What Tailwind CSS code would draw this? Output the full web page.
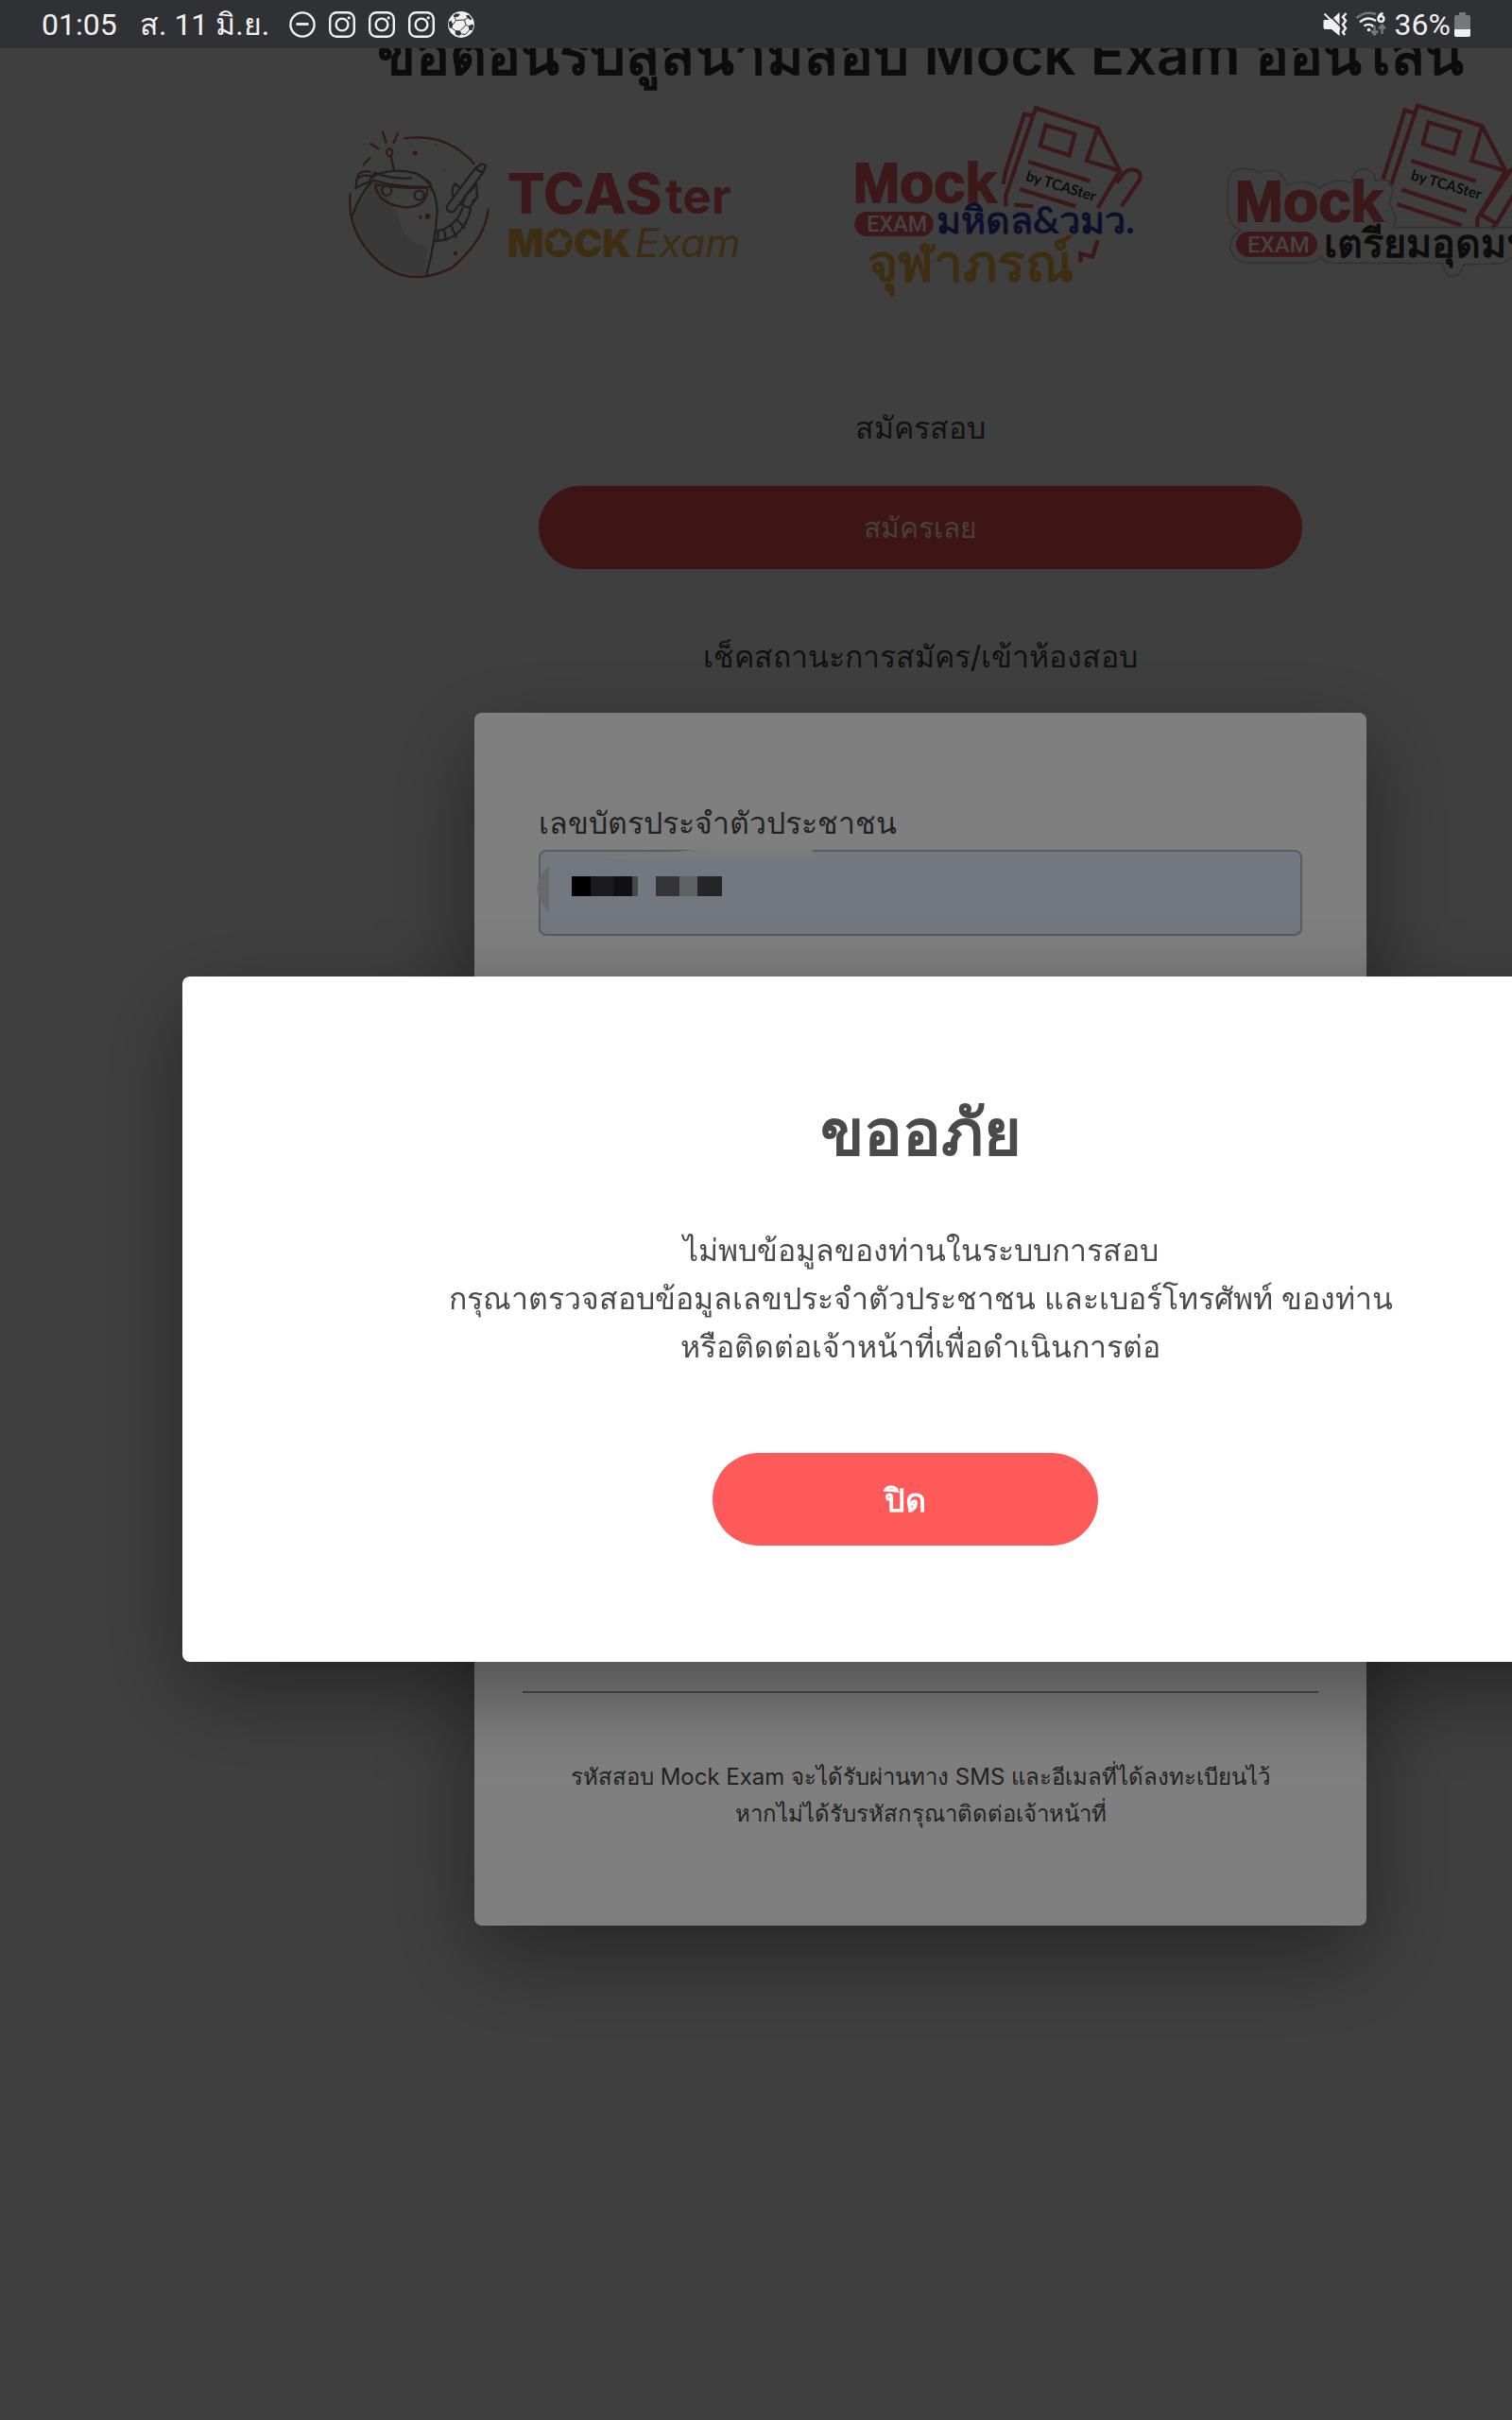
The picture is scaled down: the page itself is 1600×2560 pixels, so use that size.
<!DOCTYPE html>
<html lang="th">
<head>
    <meta charset="UTF-8">
    <meta name="viewport" content="width=device-width, initial-scale=1.0">
    <title>TCASter Mock Exam</title>
    <script src="https://cdn.jsdelivr.net/npm/@tailwindcss/browser@4"></script>
</head>
<body class="bg-[#7f7f7f] font-[Inter,sans-serif] text-[#222222] min-h-screen overflow-x-hidden">

    <!-- Status bar -->
    <header class="fixed top-0 inset-x-0 z-30 h-[51px] bg-[#303134] text-[#f0f0f0] flex items-center justify-between px-11 font-[Roboto,sans-serif] text-[32px] leading-none">
        <div class="flex items-center">
            <span class="w-[104px]">01:05</span>
            <span class="w-[158px] whitespace-nowrap">ส. 11 มิ.ย.</span>
            <div class="flex gap-3.5">
                <svg class="size-7" viewBox="0 0 28 28" fill="none" stroke="currentColor" stroke-width="2.4"><circle cx="14" cy="14" r="12.6"/><path d="M7.5 13.5h13" stroke-width="2.8"/></svg>
                <svg class="size-7" viewBox="0 0 28 28" fill="none" stroke="currentColor" stroke-width="2.4"><rect x="1.2" y="1.2" width="25.6" height="25.6" rx="7"/><circle cx="14" cy="14" r="6.4"/><circle cx="21.2" cy="6.8" r="1.6" fill="currentColor" stroke="none"/></svg>
                <svg class="size-7" viewBox="0 0 28 28" fill="none" stroke="currentColor" stroke-width="2.4"><rect x="1.2" y="1.2" width="25.6" height="25.6" rx="7"/><circle cx="14" cy="14" r="6.4"/><circle cx="21.2" cy="6.8" r="1.6" fill="currentColor" stroke="none"/></svg>
                <svg class="size-7" viewBox="0 0 28 28" fill="none" stroke="currentColor" stroke-width="2.4"><rect x="1.2" y="1.2" width="25.6" height="25.6" rx="7"/><circle cx="14" cy="14" r="6.4"/><circle cx="21.2" cy="6.8" r="1.6" fill="currentColor" stroke="none"/></svg>
                <svg class="size-7" viewBox="0 0 28 28">
                    <circle cx="14" cy="14" r="13.9" fill="currentColor"/>
                    <g fill="#303134"><path d="M8.5 2.2 13 3 11 5.400 7 6.500 5.500 4.600z"/><path d="M19 4.500 22 3.800 25.500 8 24 9.200 20.500 7z"/><path d="M.6 11.500 3.400 9.500 5.200 14 4.400 18 1.600 17.500z"/><path d="M21.500 15.500 26 13.500 27.300 15.500 25.500 20 22.500 20z"/><path d="M7.500 20 13 20.500 14.500 24 11.500 26 8 24.500z"/></g>
                    <path d="M7 6.500 8.500 9.500 5.200 14M8.500 9.500 17.500 9 20.500 7M17.500 9 19 14.500 21.500 15.500M19 14.500 13 20.500M22.500 20 18.500 24.500 14.500 24M4.400 18 7.500 20" fill="none" stroke="#303134" stroke-width="1"/>
                </svg>
            </div>
        </div>
        <div class="flex items-center">
            <svg class="w-[26px] h-7" viewBox="0 0 26 28" fill="currentColor">
                <path d="M1 9h5l3.500-1L17.500 16v10L9 19H2.500Q.5 19 .5 17V10z"/><path d="M11 7 17.500 1v13z"/>
                <path d="M1.500 2.500 18 19" stroke="currentColor" stroke-width="2"/>
                <path d="M24.500 2 21 6l3 4-3 4 3 4-3 4 2 3" fill="none" stroke="currentColor" stroke-width="2.400"/>
            </svg>
            <svg class="w-[34px] h-7 ml-2" viewBox="0 0 34 28" fill="none" stroke="currentColor" stroke-width="2.400">
                <path d="M1.500 7Q11-1 22 3" stroke="#77787a"/><path d="M5 11.500Q13 4.500 22 10"/><path d="M9.500 15.500q5-3.500 10 .5"/><circle cx="14.500" cy="19.500" r="1.800" fill="currentColor" stroke="none"/>
                <path d="M29.500 2Q24.500 3.500 24.500 8"/><circle cx="27.500" cy="8" r="2.900"/>
                <path d="M20.500 15v9m-3.500-3.500 3.500 4 3.500-4M28.500 24v-9m-3.500 3.500 3.500-4 3.500 4" stroke="#77787a"/>
            </svg>
            <span class="ml-2">36%</span>
            <svg class="w-[17px] h-[26px] ml-1" viewBox="0 0 17 26"><path d="M5 0h7v3h3q2 0 2 2v13H0V5Q0 3 2 3h3z" fill="#77787a"/><path d="M0 18h17v6q0 2-2 2H2q-2 0-2-2z" fill="currentColor"/></svg>
        </div>
    </header>

    <main class="ml-48 -mr-[156px] pt-4 pb-16 flex flex-col items-center text-center text-[32px]">
        <h1 class="text-[60px] leading-[82px] h-[74px] font-semibold whitespace-nowrap text-[#181818]">ขอต้อนรับสู่สนามสอบ Mock Exam ออนไลน์</h1>

        <!-- Logos -->
        <div class="self-start pl-[158px] flex gap-[30px]">
            <svg class="w-[480px] h-60 shrink-0" viewBox="0 150 1440 720" fill="none" stroke-linecap="round" stroke-linejoin="round" stroke-width="7">
                <path d="M82 540Q130 452 140 450L215 560Q225 650 308 665L300 752Q130 760 70 580z" fill="#737373"/>
                <g stroke="#6a3030">
                    <path d="M235 319Q370 300 455 400M500 545Q490 640 385 730Q240 800 140 700Q50 610 62 495M105 403 124 382M126 336 152 352M165 298 175 331M213 303 200 333"/>
                    <ellipse cx="187" cy="364" rx="9" ry="12"/>
                    <path d="M142 470Q150 530 240 538Q310 535 306 475Q220 480 142 465M85 440Q90 420 125 425M300 450Q320 455 318 480"/>
                    <circle cx="308" cy="566" r="5" fill="#7a3030"/><circle cx="285" cy="569" r="2"/><circle cx="268" cy="365" r="4"/><circle cx="396" cy="684" r="3"/>
                </g>
                <g stroke="#404040">
                    <path d="M192 380 201 420M130 440Q200 410 270 430Q335 460 338 550Q332 650 304 752M130 455Q90 500 68 565M140 428Q190 450 255 445M135 452Q210 475 310 474M140 428 125 450M140 440Q95 430 82 450L80 478Q90 468 130 455"/>
                    <circle cx="178" cy="485" r="15"/><circle cx="281" cy="500" r="15"/>
                    <path d="M368 535 458 415 483 428 392 550Q370 560 368 535M458 415 480 400 493 405 483 428M390 505Q380 480 395 462L408 475M440 490 462 465 465 505 440 540 415 530 430 500M465 505 450 520"/>
                    <path d="M332 615Q400 600 418 540M334 645Q420 640 444 545M360 611 366 643M383 598 398 632M402 578 424 603M340 612v33"/>
                </g>
                <circle cx="335" cy="340" r="3" fill="#404040"/><circle cx="362" cy="422" r="3" fill="#555"/>
                <g stroke="none">
                    <text x="560" y="559" font-size="178" fill="#7a3030"><tspan font-weight="800">TCAS</tspan><tspan x="1062" font-size="154" font-weight="700">ter</tspan></text>
                    <text x="560" y="695" font-size="122" fill="#7d5a22"><tspan font-weight="900">MOCK</tspan><tspan x="966" font-size="128" font-weight="400" font-style="italic">Exam</tspan></text>
                    <path d="M725 612 736 634 760 636 743 654 749 678 725 667 702 680 708 654 690 637 714 634z" fill="#7f7f7f"/>
                </g>
            </svg>
            <svg class="w-[380px] h-60 shrink-0" viewBox="0 0 1140 720" fill="none" stroke-width="13">
                <path d="M605 315 612 275 672 92 700 98M613 385V350L708 73 905 137 975 272 905 390M905 137 870 240 975 272M740 127 832 155 815 223 722 193zM685 243 880 305M657 330 835 385M640 380 700 385M965 310 990 278Q1010 260 1035 275Q1045 290 1035 305L980 385M905 492 888 545 850 535V562" stroke="#7a3030"/>
                <text x="674" y="302" transform="rotate(17 674 302)" font-size="46" font-weight="700" font-family="Lato" fill="#181818">by TCASter</text>
                <text x="128" y="371" font-size="178" font-weight="700" font-family="Liberation Sans" fill="#7a3030" stroke="#7a3030" stroke-width="6">Mock</text>
                <rect x="133" y="402" width="250" height="78" rx="39" fill="#7a3030"/>
                <text x="172" y="464" font-size="70" font-weight="500" font-family="Roboto" fill="#888">EXAM</text>
                <text x="392" y="472" font-size="119" font-weight="700" font-family="Lato" fill="#1b2058">มหิดล&amp;วมว.</text>
                <text x="174" y="624" font-size="166" font-weight="700" font-family="Lato" fill="#7d5a22">จุฬาภรณ์</text>
            </svg>
            <svg class="w-[480px] h-60 shrink-0" viewBox="0 0 1440 720" fill="none" stroke-width="13">
                <path d="M580 300 650 80 685 90M605 320 690 65 895 130 970 272 880 425V455M895 130 862 240 970 272M725 118 825 148 805 218 707 187zM670 240 875 305M640 332 845 400M625 378 830 445M890 410 990 265M890 410 940 440 1040 275M940 440 925 455" stroke="#7a3030"/>
                <text x="667" y="300" transform="rotate(16 667 300)" font-size="46" font-weight="700" font-family="Lato" fill="#181818">by TCASter</text>
                <path d="M130 460Q90 450 88 400V310Q95 260 150 265Q180 270 190 278Q260 250 275 320Q330 290 380 328Q420 290 480 310Q490 260 530 267Q560 280 555 305Q610 290 612 335L600 375Q630 420 615 452H990M130 460Q95 480 95 520Q110 565 160 565H340Q370 560 380 545Q400 568 440 565H770Q775 605 805 608Q830 600 835 570L960 565 990 545" stroke="#666" stroke-width="5"/>
                <text x="110" y="431" font-size="184" font-weight="700" font-family="Liberation Sans" fill="#7a3030" stroke="#7a3030" stroke-width="6">Mock</text>
                <rect x="114" y="465" width="258" height="80" rx="40" fill="#7a3030"/>
                <text x="150" y="530" font-size="72" font-weight="500" font-family="Roboto" fill="#888">EXAM</text>
                <text x="392" y="545" font-size="124" font-weight="700" font-family="Lato" fill="#181818">เตรียมอุดมฯ</text>
            </svg>
        </div>

        <h2 class="mt-[98px] leading-[50px]">สมัครสอบ</h2>
        <button class="mt-9 w-[808px] h-[88px] rounded-full bg-[#7b2b2b] text-[#8c8080] text-[30px] font-medium">สมัครเลย</button>
        <h2 class="mt-[68px] leading-[50px]">เช็คสถานะการสมัคร/เข้าห้องสอบ</h2>

        <!-- Status check card -->
        <form class="mt-[34px] w-[944px] h-[1283px] rounded-lg bg-white px-[51px] pt-[92px] flex flex-col text-[#444444] shadow-[0_32px_96px_rgba(0,0,0,0.4)]">
            <label for="idcard" class="pl-[17px] text-left leading-[50px]">เลขบัตรประจำตัวประชาชน</label>
            <div class="relative mx-[17px] mt-[3px]">
                <input id="idcard" type="text" class="block w-full h-[91px] rounded-lg border-2 border-[#b2b6bd] bg-[#e6eeff] px-8">
                <!-- Masked digits -->
                <div class="absolute left-[35px] top-7 flex h-[21px]">
                    <i class="w-5 bg-black"></i><i class="w-6 bg-[#36363c]"></i><i class="w-5 bg-[#222226]"></i><i class="w-1.5 bg-[#8b8c91]"></i>
                    <i class="w-[19px]"></i><i class="w-[25px] bg-[#68696c]"></i><i class="w-[19px] bg-[#bfc5c9]"></i><i class="w-[26px] bg-[#4a4b50]"></i>
                </div>
                <svg class="absolute left-0 -top-px w-[300px] h-[74px] overflow-visible" viewBox="0 0 300 74"><path d="M55 10 180 0H288L296 10z" fill="#f6f7f8"/><path d="M11 18Q-14 40 11 68z" fill="#d0d2d8"/></svg>
            </div>
            <div class="mt-auto border-t-2 border-[#999999]"></div>
            <p class="mt-[69px] mb-[99px] text-[24px] leading-[39px]">รหัสสอบ Mock Exam จะได้รับผ่านทาง SMS และอีเมลที่ได้ลงทะเบียนไว้<br>หากไม่ได้รับรหัสกรุณาติดต่อเจ้าหน้าที่</p>
        </form>
    </main>

    <div class="fixed inset-0 z-10 bg-black/50"></div>

    <!-- Error dialog -->
    <div role="dialog" aria-labelledby="dialog-title" class="fixed z-20 left-[193px] -right-[155px] top-[1033px] rounded-lg bg-white text-[#4a4a4a] text-center pt-[122px] pb-[123px] shadow-[0_32px_96px_rgba(0,0,0,0.4)]">
        <h2 id="dialog-title" class="text-[68px] leading-[84px] font-bold">ขออภัย</h2>
        <p class="mt-[58px] text-[32px] leading-[51px]">ไม่พบข้อมูลของท่านในระบบการสอบ<br>กรุณาตรวจสอบข้อมูลเลขประจำตัวประชาชน และเบอร์โทรศัพท์ ของท่าน<br>หรือติดต่อเจ้าหน้าที่เพื่อดำเนินการต่อ</p>
        <button class="mt-[87px] mr-8 w-[408px] h-[98px] rounded-full bg-[#ff5a5a] text-white text-[34px] font-bold" onclick="this.parentElement.remove()">ปิด</button>
    </div>
</body>
</html>
